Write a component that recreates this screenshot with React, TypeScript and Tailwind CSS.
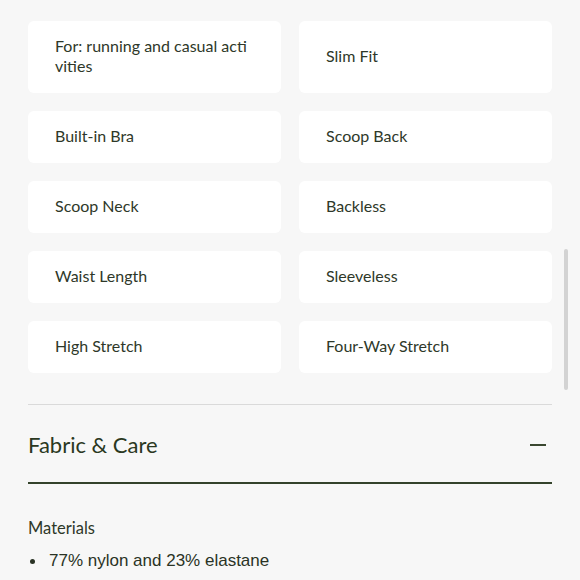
const features = [
  "For: running and casual activities",
  "Slim Fit",
  "Built-in Bra",
  "Scoop Back",
  "Scoop Neck",
  "Backless",
  "Waist Length",
  "Sleeveless",
  "High Stretch",
  "Four-Way Stretch",
];

export default function App() {
  return (
    <div className="relative min-h-[580px] overflow-hidden bg-[#f7f7f7] font-['Lato',sans-serif]">
      <div className="px-[28px] pt-[21px]">
        {/* feature cards */}
        <div className="grid grid-cols-2 gap-[18px]">
          {features.map((f) => (
            <div
              key={f}
              className="flex items-center rounded-[6px] bg-white px-[27px] pt-[15px] pb-[17px] text-[16px] leading-[20px] text-[#2e3829] break-all"
            >
              {f}
            </div>
          ))}
        </div>

        {/* fabric & care */}
        <div className="mt-[31px] border-t border-[#dadada]">
          <div className="flex h-[79px] items-center justify-between border-b-2 border-[#34432b] pt-[1px]">
            <h3 className="text-[22px] text-[#2a3821]">Fabric &amp; Care</h3>
            <div className="mr-[6px] mt-[1px] h-[2px] w-[16px] bg-[#3a4730]" />
          </div>
          <div className="pt-[34px]">
            <p className="text-[16.5px] leading-[20px] text-[#2e3829]">Materials</p>
            <ul className="mt-[13px] font-['Liberation_Sans',sans-serif] text-[17px] leading-[20px] text-[#2a3325]">
              <li className="flex items-center">
                <span className="ml-[2px] mr-[14px] h-[5px] w-[5px] rounded-full bg-[#2a3325]" />
                77% nylon and 23% elastane
              </li>
            </ul>
          </div>
        </div>
      </div>

      {/* overlay scrollbar */}
      <div className="absolute right-[12px] top-[249px] h-[141px] w-[4px] rounded-full bg-[#d3d3d3]" />
    </div>
  );
}
